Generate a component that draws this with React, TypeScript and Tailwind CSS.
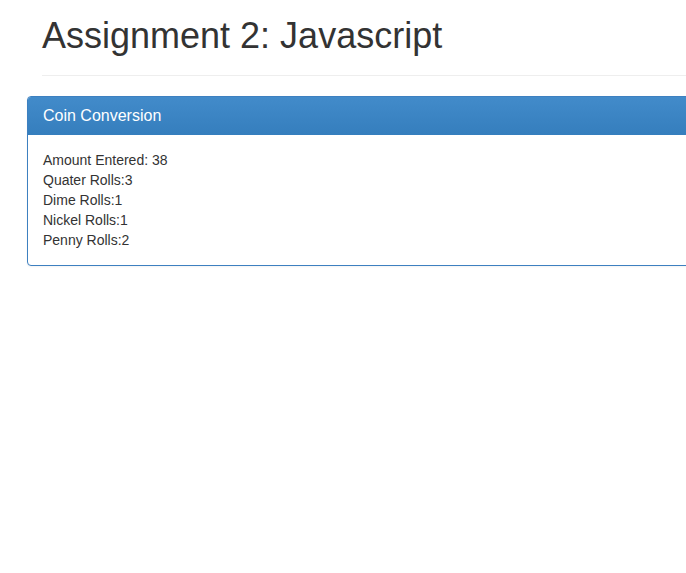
export default function App() {
  return (
    <div className="w-screen min-h-screen overflow-hidden bg-white text-[#333] text-[14px] leading-[20px]" style={{ fontFamily: '"Liberation Sans", Arial, Helvetica, sans-serif' }}>
      <div className="w-[760px]">
        <div className="ml-[42px] pb-[9px] mb-[20px] border-b border-[#eeeeee]">
          <h1 className="mt-[16px] mb-[10px] text-[36px] leading-[1.1] font-normal">Assignment 2: Javascript</h1>
        </div>
        <div className="ml-[27px] border border-[#3d80c0] rounded-[4px] bg-white shadow-[0_1px_2px_rgba(0,0,0,0.05)]">
          <div className="px-[15px] py-[10px] rounded-t-[3px] bg-gradient-to-b from-[#428bca] to-[#357ebd] text-white text-[16px] leading-[18px]">
            Coin Conversion
          </div>
          <div className="p-[15px]">
            <div>Amount Entered: 38</div>
            <div>Quater Rolls:3</div>
            <div>Dime Rolls:1</div>
            <div>Nickel Rolls:1</div>
            <div>Penny Rolls:2</div>
          </div>
        </div>
      </div>
    </div>
  );
}
